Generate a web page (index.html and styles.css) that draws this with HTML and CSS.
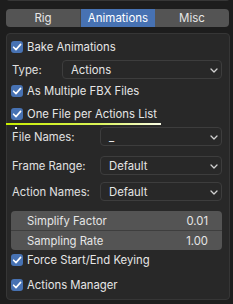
FILE: index.html
```html
<!DOCTYPE html>
<html>
<head>
<meta charset="utf-8">
<link rel="stylesheet" href="styles.css">
</head>
<body>
<div class="prev-panel"></div>
<div class="tabs">
  <div class="tab">Rig</div>
  <div class="tab active">Animations</div>
  <div class="tab">Misc</div>
</div>
<div class="panel">
  <div class="check-row r-bake"><span class="cb"><svg viewBox="0 0 12 12"><path d="M2.6 6.2 L5 8.6 L9.6 3.4" fill="none" stroke="#fff" stroke-width="1.6" stroke-linecap="round" stroke-linejoin="round"/></svg></span>Bake Animations</div>
  <div class="field-row r-type"><span class="label">Type:</span><div class="dropdown dd-type"><span>Actions</span><svg class="chev" viewBox="0 0 8 5"><path d="M1 1 L4 4 L7 1" fill="none" stroke="#d0d0d0" stroke-width="1.3" stroke-linecap="round" stroke-linejoin="round"/></svg></div></div>
  <div class="check-row r-multi"><span class="cb"><svg viewBox="0 0 12 12"><path d="M2.6 6.2 L5 8.6 L9.6 3.4" fill="none" stroke="#fff" stroke-width="1.6" stroke-linecap="round" stroke-linejoin="round"/></svg></span>As Multiple FBX Files</div>
  <div class="check-row r-onefile"><span class="cb"><svg viewBox="0 0 12 12"><path d="M2.6 6.2 L5 8.6 L9.6 3.4" fill="none" stroke="#fff" stroke-width="1.6" stroke-linecap="round" stroke-linejoin="round"/></svg></span>One File per Actions List</div>
  <div class="highlight"></div>
  <div class="dot"></div>
  <div class="field-row r-names"><span class="label">File Names:</span><div class="dropdown dd-wide"><span>_</span><svg class="chev" viewBox="0 0 8 5"><path d="M1 1 L4 4 L7 1" fill="none" stroke="#d0d0d0" stroke-width="1.3" stroke-linecap="round" stroke-linejoin="round"/></svg></div></div>
  <div class="field-row r-range"><span class="label">Frame Range:</span><div class="dropdown dd-wide"><span>Default</span><svg class="chev" viewBox="0 0 8 5"><path d="M1 1 L4 4 L7 1" fill="none" stroke="#d0d0d0" stroke-width="1.3" stroke-linecap="round" stroke-linejoin="round"/></svg></div></div>
  <div class="field-row r-action"><span class="label">Action Names:</span><div class="dropdown dd-wide"><span>Default</span><svg class="chev" viewBox="0 0 8 5"><path d="M1 1 L4 4 L7 1" fill="none" stroke="#d0d0d0" stroke-width="1.3" stroke-linecap="round" stroke-linejoin="round"/></svg></div></div>
  <div class="numgroup">
    <div class="num"><span>Simplify Factor</span><span>0.01</span></div>
    <div class="num"><span>Sampling Rate</span><span>1.00</span></div>
  </div>
  <div class="check-row r-force"><span class="cb"><svg viewBox="0 0 12 12"><path d="M2.6 6.2 L5 8.6 L9.6 3.4" fill="none" stroke="#fff" stroke-width="1.6" stroke-linecap="round" stroke-linejoin="round"/></svg></span>Force Start/End Keying</div>
  <div class="check-row r-manager"><span class="cb"><svg viewBox="0 0 12 12"><path d="M2.6 6.2 L5 8.6 L9.6 3.4" fill="none" stroke="#fff" stroke-width="1.6" stroke-linecap="round" stroke-linejoin="round"/></svg></span>Actions Manager</div>
</div>
</body>
</html>
```
FILE: styles.css
```css
html, body {
  margin: 0;
  padding: 0;
}
body {
  width: 233px;
  height: 304px;
  overflow: hidden;
  background: #1d1d1d;
  font-family: Inter, "DejaVu Sans", sans-serif;
  font-size: 11.3px;
  color: #e2e2e2;
  white-space: nowrap;
}
.prev-panel {
  margin: -4px 3px 0 6px;
  height: 4px;
  background: #282828;
  border: 1px solid #363636;
  border-top: none;
  border-radius: 0 0 4px 4px;
}
.tabs {
  display: flex;
  margin: 8px 4px 0 6px;
  height: 18px;
}
.tab {
  flex: 1;
  display: flex;
  align-items: center;
  justify-content: center;
  background: #545454;
  color: #e6e6e6;
  font-size: 11.5px;
}
.tab:first-child { border-radius: 4px 0 0 4px; border-right: 1px solid #464646; }
.tab:last-child { border-radius: 0 4px 4px 0; }
.tab.active { background: #4772b3; color: #fff; }
.panel {
  position: relative;
  margin: 6px 3px 0 6px;
  height: 265px;
  background: #282828;
  border: 1px solid #363636;
  border-radius: 4px;
  display: flex;
  flex-direction: column;
  padding: 0 7px 0 4px;
}
.check-row {
  display: flex;
  align-items: center;
  height: 12px;
  gap: 4px;
  color: #e6e6e6;
}
.cb {
  width: 12px;
  height: 12px;
  border-radius: 3px;
  background: #4772b3;
  display: flex;
  flex: none;
}
.cb svg { width: 12px; height: 12px; }
.field-row {
  display: flex;
  align-items: center;
  height: 19px;
  padding-left: 1px;
}
.label {
  flex: 1;
  color: #e0e0e0;
}
.dropdown {
  flex: none;
  box-sizing: border-box;
  height: 19px;
  border: 1px solid #3d3d3d;
  border-radius: 4px;
  background: #282828;
  display: flex;
  align-items: center;
  justify-content: space-between;
  padding: 0 3px 0 8px;
  color: #e6e6e6;
}
.dd-type { width: 160px; }
.dd-wide { width: 122px; }
.chev { width: 8px; height: 5px; margin-top: 1px; }
.r-bake { margin-top: 7px; }
.r-type { margin-top: 7px; }
.r-multi { margin-top: 6px; }
.r-onefile { margin-top: 11px; }
.r-names { margin-top: 7px; }
.r-range { margin-top: 10px; }
.r-action { margin-top: 7px; }
.numgroup {
  margin-top: 10px;
  background: #545454;
  border-radius: 4px;
  display: flex;
  flex-direction: column;
}
.num {
  height: 19px;
  display: flex;
  align-items: center;
  justify-content: space-between;
  padding: 0 14px 0 16px;
  color: #e6e6e6;
}
.num + .num { border-top: 1px solid #3e3e3e; }
.r-force { margin-top: 4px; }
.r-manager { margin-top: 13px; }
.highlight {
  position: absolute;
  left: -1px;
  top: 89px;
  width: 155px;
  height: 2px;
  background: linear-gradient(90deg, #c8ee00 0%, #dcf55a 60%, #fbfde8 100%);
}
.dot {
  position: absolute;
  left: 8px;
  top: 93px;
  width: 2px;
  height: 2px;
  background: #f0f0f0;
}
```
